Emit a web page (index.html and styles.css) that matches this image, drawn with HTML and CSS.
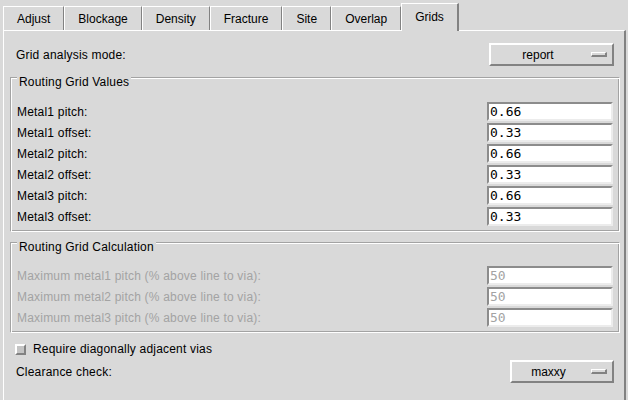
FILE: index.html
```html
<!DOCTYPE html>
<html>
<head>
<meta charset="utf-8">
<title>Grids</title>
<link rel="stylesheet" href="styles.css">
</head>
<body>
<div class="window">
  <div class="tabs">
    <div class="tab">Adjust</div>
    <div class="tab">Blockage</div>
    <div class="tab">Density</div>
    <div class="tab">Fracture</div>
    <div class="tab">Site</div>
    <div class="tab">Overlap</div>
    <div class="tab tab-active">Grids</div>
  </div>
  <div class="panel">
    <div class="row row-button">
      <span class="row-label">Grid analysis mode:</span>
      <div class="menubutton mb-report"><span class="mb-text">report</span><span class="mb-ind"></span></div>
    </div>

    <div class="group group-first">
      <div class="group-title">Routing Grid Values</div>
      <div class="group-rows">
        <div class="field"><span>Metal1 pitch:</span><div class="entry">0.66</div></div>
        <div class="field"><span>Metal1 offset:</span><div class="entry">0.33</div></div>
        <div class="field"><span>Metal2 pitch:</span><div class="entry">0.66</div></div>
        <div class="field"><span>Metal2 offset:</span><div class="entry">0.33</div></div>
        <div class="field"><span>Metal3 pitch:</span><div class="entry">0.66</div></div>
        <div class="field"><span>Metal3 offset:</span><div class="entry">0.33</div></div>
      </div>
    </div>

    <div class="group group-second">
      <div class="group-title">Routing Grid Calculation</div>
      <div class="group-rows">
        <div class="field disabled"><span>Maximum metal1 pitch (% above line to via):</span><div class="entry">50</div></div>
        <div class="field disabled"><span>Maximum metal2 pitch (% above line to via):</span><div class="entry">50</div></div>
        <div class="field disabled"><span>Maximum metal3 pitch (% above line to via):</span><div class="entry">50</div></div>
      </div>
    </div>

    <div class="check-row">
      <span class="checkbox"></span>
      <span>Require diagonally adjacent vias</span>
    </div>

    <div class="row row-button row-clearance">
      <span class="row-label">Clearance check:</span>
      <div class="menubutton mb-maxxy"><span class="mb-text">maxxy</span><span class="mb-ind"></span></div>
    </div>
  </div>
</div>
</body>
</html>
```
FILE: styles.css
```css
html, body {
  margin: 0;
  padding: 0;
}

body {
  width: 628px;
  height: 400px;
  overflow: hidden;
  background: #d9d9d9;
  color: #000;
  font-family: "Liberation Sans", Arial, Helvetica, sans-serif;
  font-size: 12px;
  line-height: 14px;
}

.window {
  display: flex;
  flex-direction: column;
  height: 400px;
}

/* ---------- tabs ---------- */
.tabs {
  display: flex;
  align-items: flex-end;
  height: 27px;
  padding: 3px 0 0 3px;
}

.tab {
  box-sizing: border-box;
  height: 24px;
  padding: 0 13px;
  display: flex;
  align-items: center;
  border-top: 1px solid #fff;
  border-left: 1px solid #fff;
  border-right: 1px solid #828282;
  white-space: nowrap;
}

.tab-active {
  position: relative;
  z-index: 1;
  height: 28px;
  margin-bottom: -1px;
  padding-bottom: 1px;
  border-right-width: 2px;
  background: #d9d9d9;
}

/* ---------- panel ---------- */
.panel {
  flex: 1;
  display: flex;
  flex-direction: column;
  margin: 0 2px 0 3px;
  padding: 12px 4px 0 6px;
  border-top: 1px solid #fff;
  border-left: 1px solid #fff;
  border-right: 2px solid #828282;
  letter-spacing: 0.2px;
}

.row {
  display: flex;
  align-items: center;
  justify-content: space-between;
}

.row-button {
  height: 23px;
}

.row-label {
  margin-left: 6px;
}

.row-clearance {
  margin-top: 3px;
}

/* ---------- menubutton ---------- */
.menubutton {
  box-sizing: border-box;
  height: 23px;
  margin-right: 6px;
  display: flex;
  align-items: center;
  border: 2px solid;
  border-color: #fff #828282 #828282 #fff;
  letter-spacing: 0;
}

.mb-report {
  width: 125px;
}

.mb-maxxy {
  width: 104px;
}

.mb-text {
  flex: 1;
  text-align: center;
}

.mb-ind {
  box-sizing: border-box;
  width: 16px;
  height: 5px;
  margin: 0 5px 0 6px;
  border-style: solid;
  border-width: 1px 2px 2px 1px;
  border-color: #fff #828282 #828282 #fff;
}

/* ---------- groove groups ---------- */
.group {
  display: flex;
  flex-direction: column;
  padding: 0 6px 4px 6px;
  border: 1px solid;
  border-color: #a3a3a3 #fff #fff #a3a3a3;
  box-shadow: inset 1px 1px 0 #fff, inset -1px -1px 0 #a3a3a3;
}

.group-first {
  margin-top: 11px;
}

.group-second {
  margin-top: 10px;
}

.group-title {
  align-self: flex-start;
  margin-top: -3px;
  padding: 0 2px;
  background: #d9d9d9;
}

.group-rows {
  margin-top: 12px;
  display: flex;
  flex-direction: column;
}

.group-second .group-rows {
  margin-top: 11px;
}

.field {
  height: 21px;
  display: flex;
  align-items: center;
  justify-content: space-between;
}

.entry {
  box-sizing: border-box;
  width: 126px;
  height: 19px;
  padding-left: 1px;
  display: flex;
  align-items: center;
  background: #fff;
  border: 2px solid;
  border-color: #8c8c8c #ececec #ececec #8c8c8c;
  font-family: "DejaVu Sans Mono", "Liberation Mono", monospace;
  font-size: 13px;
  line-height: 15px;
  letter-spacing: 0;
}

.disabled {
  color: #a3a3a3;
}

/* ---------- checkbox ---------- */
.check-row {
  margin-top: 8px;
  height: 16px;
  display: flex;
  align-items: center;
}

.checkbox {
  box-sizing: border-box;
  width: 11px;
  height: 11px;
  margin: 0 7px 0 5px;
  border: 2px solid;
  border-color: #fff #828282 #828282 #fff;
  background: #c4c4c4;
}
```
